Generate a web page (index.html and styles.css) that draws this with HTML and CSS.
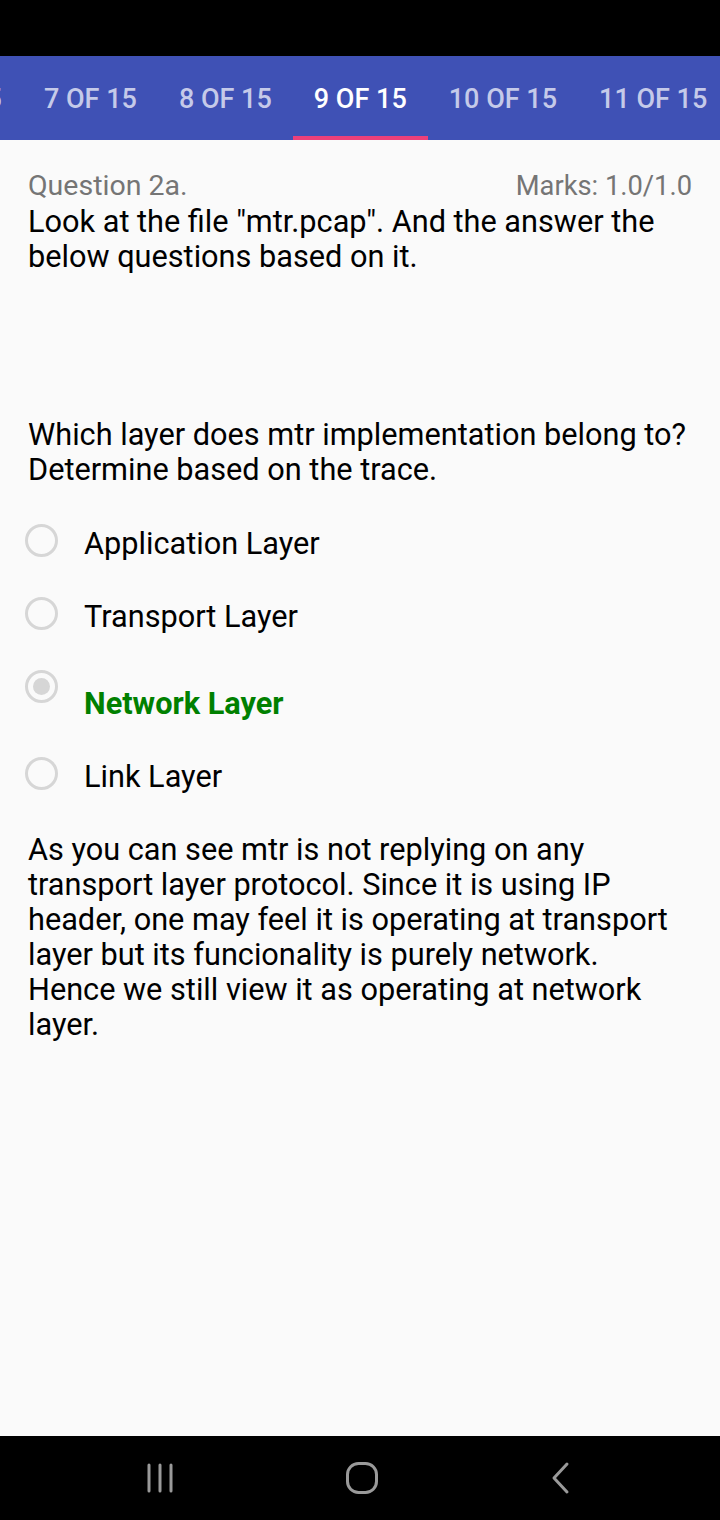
FILE: index.html
```html
<!DOCTYPE html>
<html>
<head>
<meta charset="utf-8">
<link rel="stylesheet" href="styles.css">
</head>
<body>
<div class="screen">
  <div class="statusbar"></div>
  <div class="tabbar">
    <div class="tabs">
      <div class="tab">6 OF 15</div>
      <div class="tab">7 OF 15</div>
      <div class="tab">8 OF 15</div>
      <div class="tab active">9 OF 15</div>
      <div class="tab">10 OF 15</div>
      <div class="tab">11 OF 15</div>
    </div>
  </div>
  <main class="content">
    <div class="qhead">
      <span class="qnum">Question 2a.</span>
      <span class="marks">Marks: 1.0/1.0</span>
    </div>
    <p class="text intro">Look at the file "mtr.pcap". And the answer the below questions based on it.</p>
    <p class="text question">Which layer does mtr implementation belong to? Determine based on the trace.</p>
    <div class="options">
      <div class="option"><span class="radio"></span><span class="label">Application Layer</span></div>
      <div class="option"><span class="radio"></span><span class="label">Transport Layer</span></div>
      <div class="option selected"><span class="radio"></span><span class="label">Network Layer</span></div>
      <div class="option"><span class="radio"></span><span class="label">Link Layer</span></div>
    </div>
    <p class="text explain">As you can see mtr is not replying on any transport layer protocol. Since it is using IP header, one may feel it is operating at transport layer but its funcionality is purely network. Hence we still view it as operating at network layer.</p>
  </main>
  <div class="navbar">
    <svg class="nav-icon" width="34" height="34" viewBox="0 0 34 34"><g stroke="#9a9a9a" stroke-width="3" stroke-linecap="round"><line x1="6" y1="4" x2="6" y2="30"/><line x1="17" y1="4" x2="17" y2="30"/><line x1="28" y1="4" x2="28" y2="30"/></g></svg>
    <svg class="nav-icon" width="34" height="34" viewBox="0 0 34 34"><rect x="2.5" y="2.5" width="29" height="29" rx="11" fill="none" stroke="#9a9a9a" stroke-width="3"/></svg>
    <svg class="nav-icon" width="34" height="34" viewBox="0 0 34 34"><polyline points="21,3 8,17 21,31" fill="none" stroke="#9a9a9a" stroke-width="3" stroke-linecap="round" stroke-linejoin="round"/></svg>
  </div>
</div>
</body>
</html>
```
FILE: styles.css
```css
* { box-sizing: border-box; }
html, body { margin: 0; padding: 0; }
body {
  width: 720px;
  height: 1520px;
  overflow: hidden;
  background: #fafafa;
  font-family: Roboto, "Noto Sans", sans-serif;
}
.screen {
  width: 720px;
  height: 1520px;
  display: flex;
  flex-direction: column;
}
.statusbar {
  height: 56px;
  background: #000;
  flex: none;
}
.tabbar {
  height: 84px;
  background: #3f51b5;
  overflow: hidden;
  flex: none;
}
.tabs {
  display: flex;
  height: 84px;
  margin-left: -112px;
}
.tab {
  flex: none;
  height: 84px;
  padding: 5px 21px 0;
  display: flex;
  align-items: center;
  justify-content: center;
  font-size: 27px;
  font-weight: 500;
  color: #c5cae9;
  white-space: nowrap;
  border-bottom: 4px solid transparent;
}
.tab.active {
  color: #fff;
  border-bottom-color: #ec407a;
}
.content {
  flex: 1;
  padding: 28px 20px 0 28px;
}
.qhead {
  display: flex;
  justify-content: space-between;
  align-items: baseline;
  color: #757575;
  line-height: 36px;
  margin-right: 8px;
}
.qnum { font-size: 28.5px; }
.marks { font-size: 27.3px; }
.text {
  margin: 0;
  font-size: 30.7px;
  line-height: 35px;
  color: #000;
}
.intro { margin-bottom: 143px; }
.question { margin-bottom: 17px; }
.options {
  display: flex;
  flex-direction: column;
  margin-left: -3px;
}
.option {
  display: flex;
  align-items: flex-start;
  height: 73px;
}
.radio {
  flex: none;
  width: 33px;
  height: 33px;
  border: 3px solid #d6d6d6;
  border-radius: 50%;
  margin-right: 26px;
  margin-top: 20px;
  display: flex;
  align-items: center;
  justify-content: center;
}
.label {
  font-size: 30.7px;
  line-height: 35px;
  color: #000;
  margin-top: 22px;
}
.option.selected {
  height: 87px;
}
.option.selected .radio::after {
  content: "";
  width: 17px;
  height: 17px;
  border-radius: 50%;
  background: #d6d6d6;
}
.option.selected .label {
  color: #008000;
  font-weight: 700;
  margin-top: 36px;
}
.explain {
  margin-top: 22px;
  max-width: 652px;
}
.navbar {
  height: 84px;
  background: #000;
  flex: none;
  display: flex;
  align-items: center;
  justify-content: space-between;
  padding: 0 140px 0 143px;
}
.nav-icon { display: block; }
```
